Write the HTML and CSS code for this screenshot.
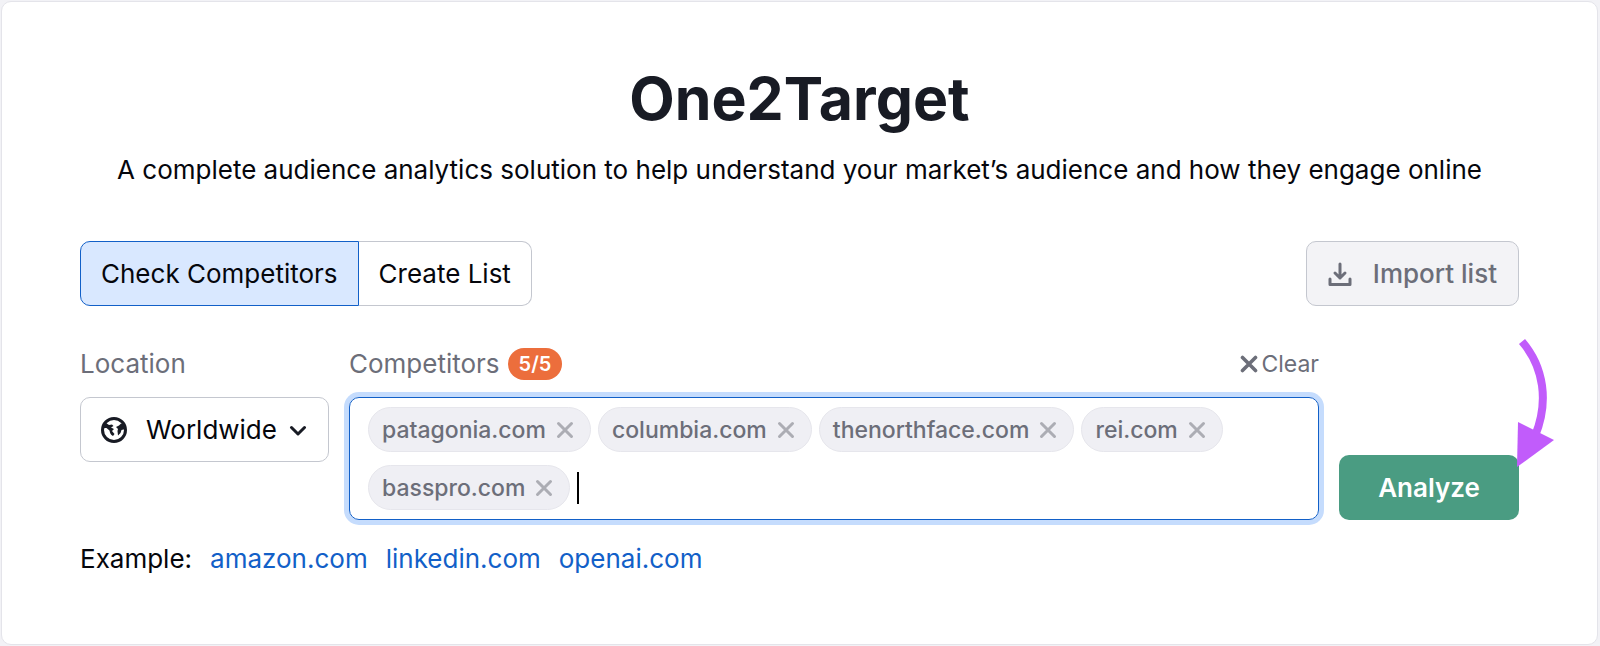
FILE: index.html
```html
<!DOCTYPE html>
<html lang="en">
<head>
    <meta charset="UTF-8">
    <meta name="viewport" content="width=device-width, initial-scale=1">
    <title>One2Target</title>
    <link rel="stylesheet" href="styles.css">
</head>
<body>

<main class="card">
    <header class="intro">
        <h1>One2Target</h1>
        <p>A complete audience analytics solution to help understand your market’s audience and how they engage online</p>
    </header>

    <div class="toolbar">
        <div class="tabs">
            <button type="button" class="tab active">Check Competitors</button>
            <button type="button" class="tab">Create List</button>
        </div>
        <button type="button" class="import-button">
            <svg width="24" height="24" viewBox="0 0 24 24" fill="none" stroke="currentColor" stroke-width="3" stroke-linecap="round" stroke-linejoin="round">
                <path d="M12 2V16M7 11l5 5 5-5"/>
                <path d="M2 17v5.500h20V17"/>
            </svg>
            Import list
        </button>
    </div>

    <form class="search">
        <div class="location">
            <div class="field-head">
                <label for="location">Location</label>
            </div>
            <div class="select-wrap">
                <svg class="globe" width="26" height="26" viewBox="0 0 26 26">
                    <circle cx="13" cy="13" r="11.5" fill="none" stroke="currentColor" stroke-width="3"/>
                    <path fill="currentColor" d="M2 8L5 6L8 8L11 7.500L12.500 9L10 10.500L13 12L11 14L13.500 17L12 19C9.500 18 9 16 8.500 13.500L5.500 11L1.500 11Z"/>
                    <path fill="currentColor" d="M15 10L18 8.500L20 6.500L22 7L24.500 12L20.500 13L19.500 16L17 18.500L16.500 14L17 12Z"/>
                </svg>
                <select id="location">
                    <option>Worldwide</option>
                </select>
                <svg class="chevron" width="18" height="12" viewBox="0 0 18 12" fill="none" stroke="currentColor" stroke-width="3" stroke-linecap="round" stroke-linejoin="round">
                    <path d="M2.500 3.500L9 10l6.500-6.500"/>
                </svg>
            </div>
        </div>

        <div class="competitors">
            <div class="field-head">
                <label for="competitors">Competitors</label>
                <span class="badge">5/5</span>
                <button type="button" class="clear-button">
                    <svg width="18" height="18" viewBox="0 0 18 18" stroke="currentColor" stroke-width="3.6" stroke-linecap="round">
                        <path d="M2.500 2.500l13 13M15.500 2.500l-13 13"/>
                    </svg>
                    Clear
                </button>
            </div>
            <div class="tag-box">
                <span class="tag">patagonia.com
                    <button type="button" aria-label="Remove patagonia.com"><svg width="18" height="18" viewBox="0 0 18 18" stroke="currentColor" stroke-width="3" stroke-linecap="round"><path d="M2.500 2.500l13 13M15.500 2.500l-13 13"/></svg></button>
                </span>
                <span class="tag">columbia.com
                    <button type="button" aria-label="Remove columbia.com"><svg width="18" height="18" viewBox="0 0 18 18" stroke="currentColor" stroke-width="3" stroke-linecap="round"><path d="M2.500 2.500l13 13M15.500 2.500l-13 13"/></svg></button>
                </span>
                <span class="tag">thenorthface.com
                    <button type="button" aria-label="Remove thenorthface.com"><svg width="18" height="18" viewBox="0 0 18 18" stroke="currentColor" stroke-width="3" stroke-linecap="round"><path d="M2.500 2.500l13 13M15.500 2.500l-13 13"/></svg></button>
                </span>
                <span class="tag">rei.com
                    <button type="button" aria-label="Remove rei.com"><svg width="18" height="18" viewBox="0 0 18 18" stroke="currentColor" stroke-width="3" stroke-linecap="round"><path d="M2.500 2.500l13 13M15.500 2.500l-13 13"/></svg></button>
                </span>
                <span class="tag">basspro.com
                    <button type="button" aria-label="Remove basspro.com"><svg width="18" height="18" viewBox="0 0 18 18" stroke="currentColor" stroke-width="3" stroke-linecap="round"><path d="M2.500 2.500l13 13M15.500 2.500l-13 13"/></svg></button>
                </span>
                <input type="text" id="competitors" class="tag-input">
            </div>
        </div>

        <div class="submit">
            <button type="submit" class="analyze-button">Analyze</button>
            <svg class="arrow" width="38" height="130" viewBox="0 0 38 130">
                <path d="M5 3.500C27 29 32 64 18 98" fill="none" stroke="#c15cfb" stroke-width="8"/>
                <path d="M1 84l36 18L0 129z" fill="#c15cfb"/>
            </svg>
        </div>
    </form>

    <div class="examples">
        <span>Example:</span>
        <a href="#">amazon.com</a>
        <a href="#">linkedin.com</a>
        <a href="#">openai.com</a>
    </div>
</main>

</body>
</html>
```
FILE: styles.css
```css
* {
    box-sizing: border-box;
}

body {
    margin: 0;
    padding: 1px 2px 2px 1px;
    background-color: #f2f2f6;
    color: #05060c;
    font-family: Inter, "Liberation Sans", sans-serif;
    font-size: 26px;
    line-height: 32px;
}

button, input, select {
    font: inherit;
    color: inherit;
    margin: 0;
}

button, select {
    cursor: pointer;
}

h1, p {
    margin: 0;
}

svg {
    display: block;
    flex: none;
}

.card {
    background-color: white;
    border: 1px solid #e4e4ea;
    border-radius: 10px;
    padding: 61px 78px 69px;
}

.intro {
    text-align: center;
}

.intro h1 {
    font-size: 59px;
    line-height: 72px;
    font-weight: 700;
    color: #181b24;
}

.intro p {
    margin-top: 19px;
}

.toolbar {
    display: flex;
    justify-content: space-between;
    margin-top: 55px;
}

.tabs {
    display: flex;
}

.tab {
    height: 65px;
    padding: 0 20px;
    background-color: white;
    border: 1px solid #c4c7cf;
    border-left: none;
    border-radius: 0 10px 10px 0;
}

.tab.active {
    background-color: #d9e8ff;
    border: 1px solid #1260c8;
    border-radius: 10px 0 0 10px;
}

.import-button {
    display: flex;
    align-items: center;
    gap: 21px;
    height: 65px;
    padding: 0 21px;
    background-color: #f3f3f6;
    border: 1px solid #c4c7cf;
    border-radius: 10px;
    color: #6c6e79;
    font-weight: 500;
}

.search {
    display: flex;
    gap: 20px;
    margin-top: 42px;
}

.location {
    width: 249px;
}

.competitors {
    flex: 1;
}

.field-head {
    display: flex;
    align-items: center;
    gap: 8px;
    height: 32px;
    margin-bottom: 17px;
    color: #6c6e79;
}

.badge {
    padding: 0 11px;
    border-radius: 16px;
    background-color: #ec6e3c;
    color: white;
    font-size: 20px;
    font-weight: 600;
}

.clear-button {
    display: flex;
    align-items: center;
    gap: 3px;
    margin-left: auto;
    padding: 0;
    background: none;
    border: none;
    font-size: 23px;
}

.select-wrap {
    position: relative;
}

.select-wrap select {
    width: 100%;
    height: 65px;
    padding: 0 50px 0 65px;
    appearance: none;
    background-color: white;
    border: 1px solid #c4c7cf;
    border-radius: 10px;
}

.globe, .chevron {
    position: absolute;
    top: 0;
    bottom: 0;
    margin: auto 0;
    color: #181b24;
    pointer-events: none;
}

.globe {
    left: 21px;
}

.chevron {
    right: 22px;
}

.tag-box {
    display: flex;
    flex-wrap: wrap;
    gap: 13px 7px;
    padding: 9px 18px;
    border: 1px solid #1260c8;
    border-radius: 10px;
    box-shadow: 0 0 0 5px #c5dcfd;
}

.tag {
    display: flex;
    align-items: center;
    gap: 10px;
    height: 45px;
    padding: 0 16px 0 13px;
    background-color: #efeff4;
    border: 1px solid #e6e6ec;
    border-radius: 23px;
    color: #6c6e79;
    font-size: 23px;
    font-weight: 500;
}

.tag button {
    padding: 0;
    background: none;
    border: none;
    color: #acadb4;
}

/* the left border stands in for the text caret */
.tag-input {
    flex: 1;
    align-self: center;
    min-width: 100px;
    height: 32px;
    padding: 0;
    border: none;
    border-left: 2px solid black;
    outline: none;
}

.submit {
    position: relative;
    display: flex;
    align-items: flex-end;
    width: 180px;
}

.analyze-button {
    width: 100%;
    height: 65px;
    background-color: #4a9c82;
    border: none;
    border-radius: 10px;
    color: white;
    font-weight: 600;
}

.arrow {
    position: absolute;
    right: -36px;
    bottom: 52px;
    pointer-events: none;
}

.examples {
    display: flex;
    gap: 18px;
    margin-top: 23px;
}

.examples a {
    color: #1260c8;
    text-decoration: none;
}
```
